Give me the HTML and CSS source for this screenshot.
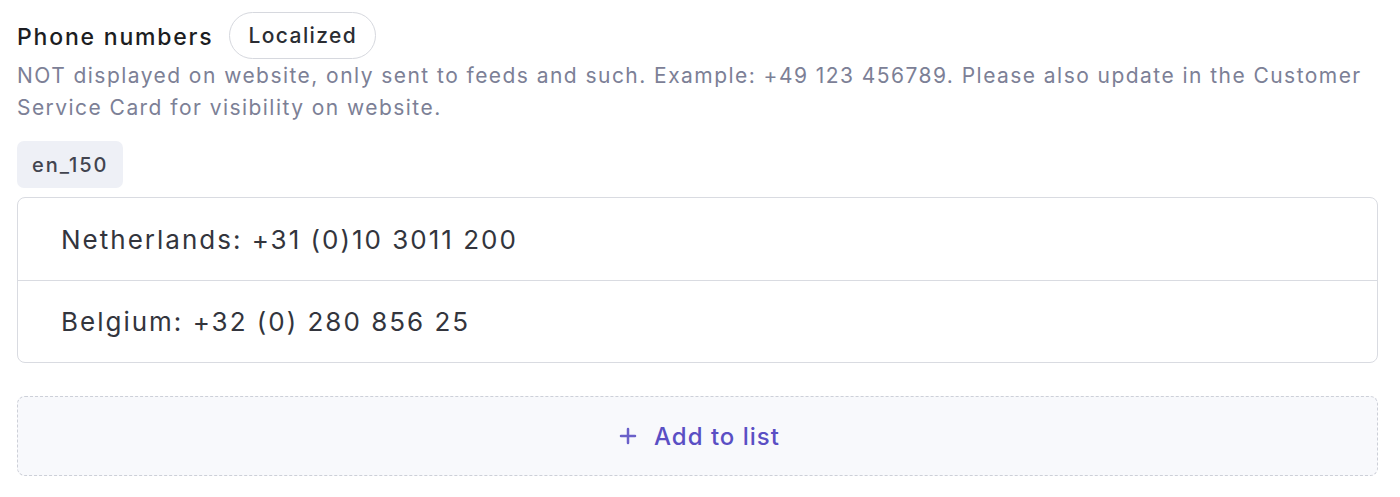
FILE: index.html
```html
<!DOCTYPE html>
<html lang="en">
<head>
<meta charset="utf-8">
<title>Phone numbers</title>
<link rel="stylesheet" href="styles.css">
</head>
<body>
<div class="field">
  <div class="field-head">
    <span class="field-label">Phone numbers</span>
    <span class="pill">Localized</span>
  </div>
  <p class="field-desc">NOT displayed on website, only sent to feeds and such. Example: +49 123 456789. Please also update in the Customer Service Card for visibility on website.</p>
  <div class="locale">en_150</div>
  <div class="list">
    <div class="list-row">Netherlands: +31 (0)10 3011 200</div>
    <div class="list-row">Belgium: +32 (0) 280 856 25</div>
  </div>
  <button class="add-btn" type="button">
    <svg class="plus" viewBox="0 0 18 18" width="18" height="18" aria-hidden="true"><path d="M9 2v14M2 9h14" stroke="currentColor" stroke-width="2.5" stroke-linecap="round" fill="none"/></svg>
    <span>Add to list</span>
  </button>
</div>
</body>
</html>
```
FILE: styles.css
```css
* { box-sizing: border-box; }
html, body { margin: 0; background: #ffffff; }
body {
  font-family: Inter, "Noto Sans", "Liberation Sans", sans-serif;
  color: #1f2128;
  padding: 12px 20px 0 17px;
}
.field { display: flex; flex-direction: column; }
.field-head { display: flex; align-items: center; gap: 16px; }
.field-label { font-size: 23px; font-weight: 500; color: #1c1d22; letter-spacing: 1.8px; padding-top: 2px; }
.pill {
  display: inline-flex; align-items: center;
  height: 47px; padding: 0 18px;
  border: 1.5px solid #d6d8de; border-radius: 24px;
  font-size: 21px; font-weight: 500; color: #2b2d33; letter-spacing: 1.4px;
}
.field-desc {
  margin: 1px -2px 0 0; font-size: 21px; line-height: 32px; color: #7c8096; letter-spacing: 1.45px;
}
.locale {
  align-self: flex-start; margin-top: 17px;
  height: 47px; padding: 0 15px; display: flex; align-items: center;
  background: #eef0f6; border-radius: 7px;
  font-size: 20px; font-weight: 500; color: #42444f; letter-spacing: 2px;
}
.list {
  margin-top: 9px; margin-right: 2px;
  border: 1.5px solid #d9dbe1; border-radius: 8px; overflow: hidden;
}
.list-row {
  height: 82px; display: flex; align-items: center;
  padding-left: 43px; font-size: 26px; color: #33353d; letter-spacing: 2px;
}
.list-row + .list-row { border-top: 1.5px solid #d9dbe1; }
.add-btn {
  margin-top: 33px; height: 80px; width: auto; margin-right: 2px;
  display: flex; align-items: center; justify-content: center; gap: 17px;
  background: #f8f9fc; border: 1.5px dashed #cdd0d8; border-radius: 8px;
  font-family: inherit; font-size: 24px; font-weight: 500; color: #5a4fc4;
  letter-spacing: 1px; padding: 0 0 0 4px;
}
.plus { color: #6a60c9; }
```
